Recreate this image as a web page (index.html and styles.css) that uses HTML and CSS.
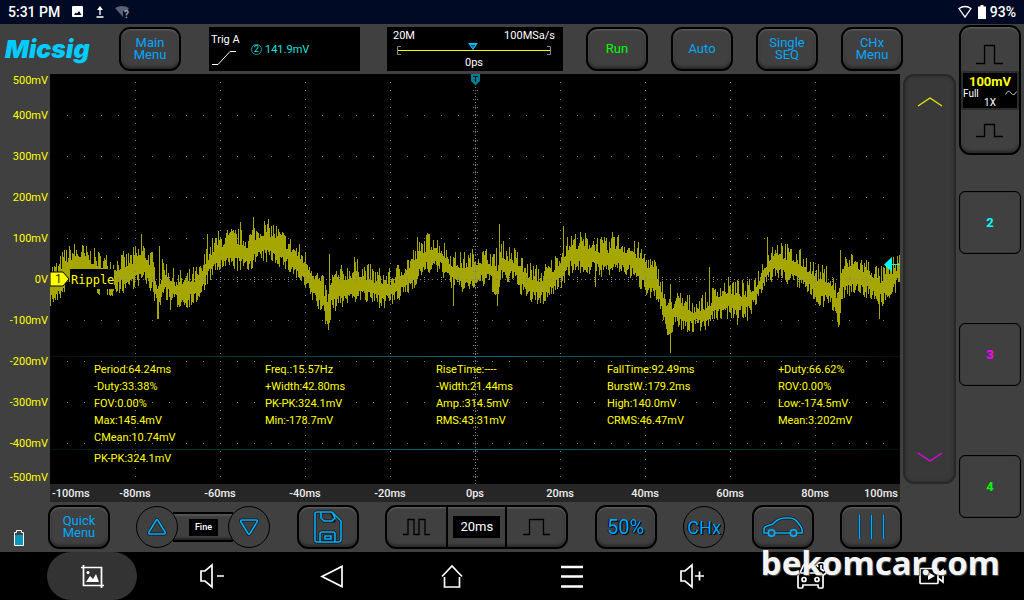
FILE: index.html
```html
<!DOCTYPE html>
<html lang="en">
<head>
<meta charset="utf-8">
<meta name="viewport" content="width=device-width, initial-scale=1">
<title>Micsig Oscilloscope</title>
<link rel="stylesheet" href="styles.css">
</head>
<body>
<header class="status">
  <span class="clock">5:31 PM</span>
  <svg class="status-icons" width="60" height="16" viewBox="0 0 60 16" aria-hidden="true">
    <path fill="#fff" fill-rule="evenodd" d="M3 2h9q1 0 1 1v9q0 1-1 1h-9q-1 0-1-1v-9q0-1 1-1zM4 11h7.500l-2.500-4-2 2.500-1.200-1z"/>
    <path stroke="#fff" stroke-width="1.300" fill="none" d="M30 11V4M26.500 13h7"/><path fill="#fff" d="M27 6l3-4 3 4z"/>
    <path fill="#5a6175" d="M45 4q7-4 14 0l-2 3h-4v6z"/><text x="54" y="14" class="unknown">?</text>
  </svg>
  <svg class="push" width="14" height="14" viewBox="0 0 14 14" aria-hidden="true"><path fill="none" stroke="#fff" stroke-width="1.300" d="M1 3.500q6-4 12 0l-6 8.500z"/></svg>
  <svg width="8" height="14" viewBox="0 0 8 14" aria-hidden="true"><path fill="#fff" d="M2.500 0h3v1.500H8V14H0V1.500h2.500z"/></svg>
  <span class="clock">93%</span>
</header>

<main class="scope">
  <div class="work">
    <div class="topbar">
      <div class="logo">Micsig</div>
      <button class="btn">Main<br>Menu</button>
      <div class="panel trigger">
        <div class="trig-edge">
          <span>Trig A</span>
          <svg width="26" height="16" viewBox="0 0 26 16" aria-hidden="true"><path fill="none" stroke="#fff" d="M1 14.500h6L19 1.500h6"/></svg>
        </div>
        <span class="trig-source">2</span><span class="trig-level">141.9mV</span>
      </div>
      <div class="panel timebase">
        <div class="spread"><span>20M</span><span>100MSa/s</span></div>
        <svg class="range" viewBox="0 0 156 14" aria-hidden="true">
          <path stroke="#ff0" d="M2 8.500h152"/>
          <path fill="none" stroke="#88889a" d="M5 4.500H1.500v8H5M151 4.500h3.500v8H151"/>
          <path fill="#00bfff" d="M72 1h10l-5 7z"/><path stroke="#046" fill="none" d="M75 3.500h4M77 3v3"/>
        </svg>
        <span>0ps</span>
      </div>
      <div class="runkeys">
        <button class="btn run">Run</button>
        <button class="btn">Auto</button>
        <button class="btn">Single<br>SEQ</button>
        <button class="btn">CHx<br>Menu</button>
      </div>
    </div>

    <div class="display">
      <div class="volts">
        <span>500mV</span><span>400mV</span><span>300mV</span><span>200mV</span><span>100mV</span><span>0V</span><span>-100mV</span><span>-200mV</span><span>-300mV</span><span>-400mV</span><span>-500mV</span>
      </div>
      <div class="plot">
        <svg class="trace" viewBox="0 0 850 410" preserveAspectRatio="none" role="img" aria-label="Channel 1 waveform">
          <path id="wave" class="wave"/>
          <path id="grid" class="grid"/>
        </svg>
        <div class="channel">
          <svg width="20" height="16" viewBox="0 0 20 16" aria-hidden="true"><path fill="#ff0" stroke="#000" d="M0 1h13l6 7-6 7H0z"/></svg>
          <span class="channel-no">1</span><span class="channel-name">Ripple</span>
        </div>
        <svg class="time-mark" width="10" height="12" viewBox="0 0 10 12" aria-hidden="true"><path fill="#057a94" d="M0 0h9v7l-4.500 4.500L0 7z"/><path fill="none" stroke="#011" d="M2 2.500h5M4.500 2v6"/></svg>
        <svg class="level-mark" width="16" height="15" viewBox="0 0 16 15" aria-hidden="true"><path fill="#0ff" d="M0 7.500L8 0v15z"/><path stroke="#0ff" d="M7 7.500h9"/></svg>
        <div class="measures">
          <div class="measure-grid">
            <span>Period:64.24ms</span><span>Freq.:15.57Hz</span><span>RiseTime:----</span><span>FallTime:92.49ms</span><span>+Duty:66.62%</span>
            <span>-Duty:33.38%</span><span>+Width:42.80ms</span><span>-Width:21.44ms</span><span>BurstW.:179.2ms</span><span>ROV:0.00%</span>
            <span>FOV:0.00%</span><span>PK-PK:324.1mV</span><span>Amp.:314.5mV</span><span>High:140.0mV</span><span>Low:-174.5mV</span>
            <span>Max:145.4mV</span><span>Min:-178.7mV</span><span>RMS:43.31mV</span><span>CRMS:46.47mV</span><span>Mean:3.202mV</span>
            <span>CMean:10.74mV</span>
          </div>
          <div class="measure-last">PK-PK:324.1mV</div>
        </div>
      </div>
      <div class="times">
        <span>-100ms</span><span>-80ms</span><span>-60ms</span><span>-40ms</span><span>-20ms</span><span>0ps</span><span>20ms</span><span>40ms</span><span>60ms</span><span>80ms</span><span>100ms</span>
      </div>
      <div class="slider">
        <button class="chevron" aria-label="Up"><svg width="26" height="12" viewBox="0 0 26 12"><path fill="none" stroke="#ee0" stroke-width="1.200" d="M1 10L13 2l12 8"/></svg></button>
        <button class="chevron" aria-label="Down"><svg width="26" height="12" viewBox="0 0 26 12"><path fill="none" stroke="#e0e" stroke-width="1.200" d="M1 2l12 8 12-8"/></svg></button>
      </div>
    </div>

    <div class="toolbar">
      <svg class="battery" width="10" height="18" viewBox="0 0 10 18" aria-hidden="true"><path fill="#444" stroke="#fff" d="M.5 3.500h2v-2h5v2h2v13h-9z"/><path fill="#0a95bd" d="M1 6h8v10H1z"/></svg>
      <div class="toolkeys">
        <button class="btn">Quick<br>Menu</button>
        <div class="fine">
          <button class="round" aria-label="Increase"><svg width="20" height="18" viewBox="0 0 20 18"><path class="shade" d="M9 2.500q1-2 2 0l7 11.500q1 2-1 2H3q-2 0-1-2z"/><path class="line" d="M9 2.500q1-2 2 0l7 11.500q1 2-1 2H3q-2 0-1-2z"/></svg></button>
          <div class="fine-bar"><span>Fine</span></div>
          <button class="round" aria-label="Decrease"><svg width="20" height="18" viewBox="0 0 20 18"><path class="shade" d="M9 15.500q1 2 2 0L18 4q1-2-1-2H3q-2 0-1 2z"/><path class="line" d="M9 15.500q1 2 2 0L18 4q1-2-1-2H3q-2 0-1 2z"/></svg></button>
        </div>
        <button class="btn" aria-label="Save"><svg width="30" height="34" viewBox="0 0 30 34"><path class="shade" d="M4 2h15l9 9v18q0 3-3 3H4q-2 0-2-2V4q0-2 2-2zM8 2v6l3 3h10V8L18 2M7 32V24q0-2 2-2h11q2 0 2 2v8M12 26h6v3h-6z"/><path class="line" d="M4 2h15l9 9v18q0 3-3 3H4q-2 0-2-2V4q0-2 2-2zM8 2v6l3 3h8l3-3-3-6M7 32V24q0-2 2-2h11q2 0 2 2v8M12 26h6v3h-6z"/></svg></button>
        <div class="timekeys">
          <button class="seg" aria-label="Shorter time base"><svg width="28" height="20" viewBox="0 0 28 20"><path class="pulse" d="M0 17.500h5V2.500h6v15h5V2.500h6v15h5"/></svg></button>
          <div class="seg seg-value"><span class="time-value">20ms</span></div>
          <button class="seg" aria-label="Longer time base"><svg width="28" height="20" viewBox="0 0 28 20"><path class="pulse" d="M0 17.500h6.500V2.500h14v15H27"/></svg></button>
        </div>
        <button class="btn half">50%</button>
        <button class="round chx">CHx</button>
        <button class="btn" aria-label="Automotive"><svg width="42" height="22" viewBox="0 0 42 22"><path class="shade" d="M6 17H2v-4q0-2 3-3l6-2q5-6 12-6h5q5 0 9 6 4 5 3 9h-5M13 17h15"/><path class="line" d="M6 17H2v-4q0-2 3-3l6-2q5-6 12-6h5q5 0 9 6 4 5 3 9h-5M13 17h15"/><circle class="line" cx="9.500" cy="17" r="3.200"/><circle class="line" cx="31.500" cy="17" r="3.200"/></svg></button>
        <button class="btn" aria-label="Cursors"><svg width="30" height="26" viewBox="0 0 30 26"><path class="shade" d="M3.500 1v24M15.500 1v24M27.500 1v24"/><path class="line" d="M3.500 1v24M15.500 1v24M27.500 1v24"/></svg></button>
      </div>
    </div>
  </div>

  <aside class="channels">
    <div class="ch1">
      <button class="ch1-key" aria-label="Increase scale"><svg width="28" height="22" viewBox="0 0 28 22"><path class="pulse" d="M0 20.500h8.500V2.500h10v18H27"/></svg></button>
      <div class="ch1-info"><b>100mV</b><span class="ch1-mid">Full<svg width="12" height="8" viewBox="0 0 12 8" aria-hidden="true"><path fill="none" stroke="#bbb" d="M.5 5.500Q3 0 6 4t5.500-1.500"/></svg></span><span>1X</span></div>
      <button class="ch1-key" aria-label="Decrease scale"><svg width="28" height="16" viewBox="0 0 28 16"><path class="pulse" d="M0 14.500h8.500V2.500h10v12H27"/></svg></button>
    </div>
    <button class="ch ch-2">2</button>
    <button class="ch ch-3">3</button>
    <button class="ch ch-4">4</button>
  </aside>
</main>

<nav class="nav">
  <button class="active" aria-label="Screenshot"><svg width="26" height="26" viewBox="0 0 26 26"><path d="M2 4.500h20.500V25M4.500 2v20.500H25"/><path class="solid" d="M7 19l4-6 3 3 3-5 3 8z"/><circle class="solid" cx="9" cy="9.500" r="1.500"/></svg></button>
  <button aria-label="Volume down"><svg width="26" height="26" viewBox="0 0 26 26"><path d="M2 8h4l7-6v22l-7-6H2zM18 13h7"/></svg></button>
  <button aria-label="Back"><svg width="26" height="26" viewBox="0 0 26 26"><path d="M3 13.500L23 3.500v20z"/></svg></button>
  <button aria-label="Home"><svg width="26" height="26" viewBox="0 0 26 26"><path d="M3 13.500L13 3l10 10.500M5.500 14v10h15V14"/></svg></button>
  <button aria-label="Menu"><svg width="26" height="26" viewBox="0 0 26 26"><path class="thick" d="M2 4h22M2 13.500h22M2 23.500h22"/></svg></button>
  <button aria-label="Volume up"><svg width="26" height="26" viewBox="0 0 26 26"><path d="M2 8h4l7-6v22l-7-6H2zM16 13h9M20.500 8.500v9"/></svg></button>
  <button aria-label="Vehicle"><svg width="34" height="28" viewBox="0 0 34 28"><path d="M3 14q0-2 2-3l3-7q1-2 3-2h9q2 0 3 3M3 14v11q0 1 1 1h3q1 0 1-3h15q0 3 1 3h3q1 0 1-1V14q0-1-2-3H6"/><circle cx="9" cy="17.500" r="2"/><circle cx="22" cy="17.500" r="2"/><circle cx="26" cy="7" r="6.500"/><path d="M26 3v4l3 2"/></svg></button>
  <button aria-label="Record"><svg width="28" height="26" viewBox="0 0 28 26"><path d="M2 6.500q0-1 1-1h16q1 0 1 1v13q0 1-1 1H3q-1 0-1-1zM20 11l5-4v12l-5-4"/><path class="solid" d="M10 9l7 4-7 4z"/></svg></button>
  <div class="site">bekomcar.com</div>
</nav>
<script src="scope.js"></script>
</body>
</html>
```
FILE: styles.css
```css
* { box-sizing: border-box; }
body {
  margin: 0;
  min-height: 100vh;
  display: flex;
  flex-direction: column;
  background: #404040;
  color: #fff;
  font: 11px/13px Roboto, "Liberation Sans", sans-serif;
}
button {
  margin: 0;
  padding: 0;
  border: 0;
  background: none;
  color: inherit;
  font: inherit;
  display: flex;
  align-items: center;
  justify-content: center;
}
svg { display: block; flex: none; }

.status {
  height: 24px;
  display: flex;
  align-items: center;
  gap: 6px;
  padding: 0 8px;
  background: #000a24;
}
.clock { font-size: 14px; font-weight: 500; line-height: 24px; }
.status-icons { margin-left: 4px; }
.unknown { fill: #a0a4b0; font-size: 10px; font-weight: 700; }
.push { margin-left: auto; }
.status .clock:last-child { margin-left: -2px; }

.scope { flex: 1; display: grid; grid-template-columns: 1fr 67px; }
.work { display: flex; flex-direction: column; min-width: 0; }

.topbar {
  height: 50px;
  display: flex;
  align-items: center;
  gap: 22px;
  padding-right: 54px;
}
.topbar > * { flex: none; }
.logo {
  width: 91px;
  margin-right: 6px;
  padding-left: 5px;
  color: #00ccff;
  font: italic 900 25px/30px Inter, sans-serif;
}
.btn {
  width: 62px;
  height: 44px;
  border: 2px solid #000;
  border-radius: 11px;
  background: #404040;
  box-shadow: inset 0 1px 2px #666, inset 0 -2px 3px #262626;
  color: #00a8ff;
  font-size: 13px;
  line-height: 12px;
  text-align: center;
}
.topbar > .btn { margin-right: 6px; }
.run { color: #00ff00; }
.panel { height: 44px; background: #000; }
.trigger { width: 151px; margin-right: 5px; display: flex; align-items: center; padding-left: 2px; }
.trig-edge { display: flex; flex-direction: column; gap: 4px; width: 37px; }
.trig-source {
  width: 11px;
  height: 11px;
  margin: 0 3px;
  border: 1px solid #0a9a98;
  border-radius: 50%;
  color: #1de0dd;
  font-size: 9px;
  line-height: 9px;
  text-align: center;
}
.trig-level { color: #1de0dd; }
.timebase {
  width: 176px;
  display: flex;
  flex-direction: column;
  align-items: center;
  padding: 2px 8px 0 6px;
}
.spread { align-self: stretch; display: flex; justify-content: space-between; }
.range { width: 156px; height: 14px; }
.runkeys { display: flex; gap: 23px; margin-left: auto; }

.display {
  flex: 1;
  display: grid;
  grid-template-columns: 50px 1fr 57px;
  grid-template-rows: 1fr 18px;
}
.volts {
  display: grid;
  grid-template-rows: 1fr repeat(9, 2fr) 1fr;
  align-items: center;
  justify-items: end;
  padding-right: 2px;
  color: #ff0;
}
.volts span:first-child { align-self: start; }
.volts span:last-child { align-self: end; }
.plot { position: relative; background: #000; min-height: 410px; }
.trace { position: absolute; inset: 0; width: 100%; height: 100%; }
.wave { fill: none; stroke: #a6a600; shape-rendering: crispEdges; }
.grid { fill: #808080; shape-rendering: crispEdges; }
.channel {
  position: absolute;
  left: 0;
  top: 50%;
  margin-top: -10px;
  display: flex;
  align-items: center;
  height: 20px;
}
.channel-no { position: absolute; left: 5px; color: #330; font-size: 12px; }
.channel-name {
  background: #000;
  color: #ff0;
  padding: 3px 0 1px 1px;
  font: 12px/16px "DejaVu Sans Mono", monospace;
}
.time-mark { position: absolute; top: 0; left: 50%; margin-left: -4px; }
.level-mark { position: absolute; right: 0; top: 183px; }
.measures { position: absolute; left: 0; right: 0; bottom: 17px; color: #ff0; line-height: 17px; }
.measure-grid {
  display: grid;
  grid-template-columns: repeat(4, 7fr) 5fr;
  padding: 4px 0 3px 44px;
  border: solid transparent;
  border-width: 1px 0;
  border-image: linear-gradient(90deg, #001414, #007070, #001414) 1;
}
.measure-last { padding-left: 44px; }
.times {
  grid-column: 2;
  grid-row: 2;
  display: grid;
  grid-template-columns: 1fr repeat(9, 2fr) 1fr;
  align-items: center;
  justify-items: center;
  background: #262626;
  color: #eee;
  font-weight: 500;
}
.times span:first-child { justify-self: start; padding-left: 2px; }
.times span:last-child { justify-self: end; padding-right: 2px; }
.slider {
  grid-column: 3;
  grid-row: 1;
  margin: 0 1px 0 3px;
  border: 2px solid #282828;
  border-radius: 11px;
  background: #393939;
  box-shadow: inset 0 0 3px #2a2a2a;
  display: flex;
  flex-direction: column;
  justify-content: space-between;
  align-items: center;
  padding: 20px 0 19px;
}

.toolbar { height: 50px; display: flex; align-items: center; padding: 0 55px 0 14px; }
.battery { margin-top: 22px; }
.toolkeys { flex: 1; display: flex; align-items: center; justify-content: space-between; padding-left: 24px; }
.fine { display: flex; align-items: center; }
.round {
  width: 42px;
  height: 42px;
  border: 1px solid #000;
  border-radius: 50%;
  background: #404040;
  z-index: 1;
}
.fine-bar {
  width: 60px;
  height: 30px;
  margin: 0 -5px;
  border: solid #000;
  border-width: 2px 0;
  background: #404040;
  box-shadow: inset 0 2px 2px #555, inset 0 -2px 2px #222;
  display: flex;
  align-items: center;
  justify-content: center;
}
.fine-bar span { background: #000; padding: 2px 6px; font-size: 9px; font-weight: 500; }
.shade { fill: none; stroke: #151515; stroke-width: 3; }
.line { fill: none; stroke: #00b0ff; stroke-width: 1.6; }
.pulse { fill: none; stroke: #000; stroke-width: 1.3; }
.timekeys {
  width: 183px;
  height: 44px;
  border: 2px solid #000;
  border-radius: 11px;
  box-shadow: inset 0 1px 2px #666, inset 0 -2px 3px #262626;
  display: flex;
}
.seg { flex: 1; display: flex; align-items: center; justify-content: center; }
.seg + .seg { border-left: 2px solid #000; }
.timekeys .seg-value { flex: none; }
.seg-value { padding: 0 5px; }
.time-value { background: #000; padding: 4px 7px; font-size: 13px; line-height: 14px; }
.half { font-size: 20px; text-shadow: 1px 1px #000, -1px 0 #000; }
.chx { color: #00a8ff; font-size: 18px; text-shadow: 1px 1px #000, -1px 0 #000; }

.channels { display: grid; grid-template-rows: repeat(4, 1fr); align-items: center; padding: 0 3px 0 2px; }
.ch1 {
  height: 130px;
  border: 2px solid #000;
  border-radius: 11px;
  background: #404040;
  box-shadow: inset 0 1px 2px #666, inset 0 -2px 3px #262626;
  display: flex;
  flex-direction: column;
  padding: 0 2px;
}
.ch1-key { flex: 1; }
.ch1-key:first-child svg { margin-top: 8px; }
.ch1-info {
  background: #000;
  outline: 2px solid #2c2c2c;
  display: flex;
  flex-direction: column;
  align-items: center;
  font-size: 10px;
  line-height: 9px;
  padding: 2px 0 1px;
}
.ch1-info b { color: #ff0; font-size: 13px; line-height: 14px; }
.ch1-mid { align-self: stretch; display: flex; justify-content: space-between; align-items: center; }
.ch { height: 63px; border: 1px solid #000; border-radius: 6px; background: #404040; font-size: 13px; font-weight: 700; box-shadow: inset 0 0 1px #000; }
.ch-2 { color: #00ffff; }
.ch-3 { color: #ff00ff; }
.ch-4 { color: #00ff00; }

.nav {
  position: relative;
  height: 48px;
  padding: 0 32px;
  display: grid;
  grid-template-columns: repeat(8, 1fr);
  justify-items: center;
  background: #000;
}
.nav button { width: 90px; height: 48px; border-radius: 24px; }
.nav .active { background: #333; }
.nav path, .nav circle { fill: none; stroke: #fff; stroke-width: 1.7; }
.nav .thick { stroke-width: 2.5; }
.nav .solid { fill: #fff; stroke: none; }
.site {
  position: absolute;
  right: 24px;
  top: -9px;
  color: #f4f4f4;
  font: 700 33px/40px "Noto Sans", sans-serif;
  text-shadow: 1px 1px 1px #555;
  pointer-events: none;
}
```
FILE: scope.js
```js
// Signal envelope: [x, top, bottom] in plot units.
const envelope = [
  [0,198,226],[8,196,224],[13,186,214],[23,179,204],[33,181,203],[50,188,216],[63,192,216],[77,188,211],[93,178,204],[102,189,214],[108,214,238],[113,193,216],[123,206,227],[133,208,229],[150,201,223],[157,181,204],[167,168,194],[183,164,189],[197,168,194],[203,161,186],[213,156,183],[223,158,183],[240,173,194],[253,184,209],[263,198,223],[273,214,238],[278,226,254],[281,206,233],
  [290,203,228],[307,196,221],[323,203,226],[340,206,228],[350,198,221],[360,188,213],[368,178,201],[378,169,193],[390,174,194],[403,188,211],[413,189,213],[430,184,208],[440,184,206],[447,196,226],[451,178,203],[463,183,204],[477,198,223],[490,203,226],[503,193,216],[512,181,206],[520,169,194],[540,169,194],[557,176,198],[563,168,194],[577,174,196],[590,181,209],[607,199,223],[613,219,246],[618,236,266],[623,228,248],
  [630,228,251],[643,233,253],[657,229,249],[667,218,241],[680,214,238],[697,219,239],[707,206,226],[715,188,209],[725,174,198],[737,181,204],[753,188,211],[767,201,226],[777,203,226],[783,211,233],[788,224,251],[792,193,219],[802,189,214],[817,194,218],[830,204,226],[840,196,223],[850,188,206]
];
// Isolated peaks: x -> [top, bottom], null keeps the envelope.
const peaks = {
  33:[172,null], 91:[160,null], 109:[172,null], 107:[null,245], 108:[null,245], 120:[null,236], 157:[160,null], 190:[148,null], 203:[143,null], 214:[147,null],
  279:[180,null], 277:[null,250], 278:[null,256], 304:[183,null], 367:[163,null], 378:[160,null], 383:[166,null], 403:[null,232], 446:[174,null], 447:[null,232],
  449:[150,null], 513:[152,null], 545:[null,213], 563:[163,null], 564:[163,null], 620:[210,279], 659:[193,null], 687:[null,251], 717:[163,null], 731:[169,null],
  788:[null,253], 789:[null,251], 790:[176,null], 802:[181,null], 829:[null,245], 849:[181,null]
};

let seed = 7;
function random() {
  seed = (seed * 16807) % 2147483647;
  return seed / 2147483647;
}

let wave = "";
let k = 0;
for (let x = 0; x < 850; x++) {
  while (envelope[k + 1][0] < x) k++;
  const [x0, t0, b0] = envelope[k];
  const [x1, t1, b1] = envelope[k + 1];
  const f = (x - x0) / (x1 - x0);
  let top = t0 + (t1 - t0) * f + 6 - 18 * random() ** 1.6;
  let bottom = b0 + (b1 - b0) * f - 7 + 14 * random() ** 1.3;
  if (peaks[x]) {
    top = peaks[x][0] ?? top;
    bottom = peaks[x][1] ?? bottom;
  }
  wave += `M${x + 0.5} ${Math.round(top)}V${Math.round(bottom)}`;
}
document.getElementById("wave").setAttribute("d", wave);

let dots = "";
const dot = (x, y) => { dots += `M${Math.round(x)} ${Math.round(y)}h1v1h-1z`; };
for (let col = 1; col < 10; col++) {
  for (let i = 1; i < 50; i++) dot(col * 85, i * 8.2);
}
for (let row = 1; row < 10; row++) {
  for (let i = 1; i < 50; i++) dot(i * 17, row * 41);
}
for (let y = 10; y < 410; y += 3) dot(425, y);
for (let x = 4; x < 850; x += 4.25) dot(x, 205);
for (let i = 1; i < 50; i++) {
  dot(423, i * 8.2);
  dot(427, i * 8.2);
  dot(i * 17, 203);
  dot(i * 17, 207);
}
document.getElementById("grid").setAttribute("d", dots);
```
